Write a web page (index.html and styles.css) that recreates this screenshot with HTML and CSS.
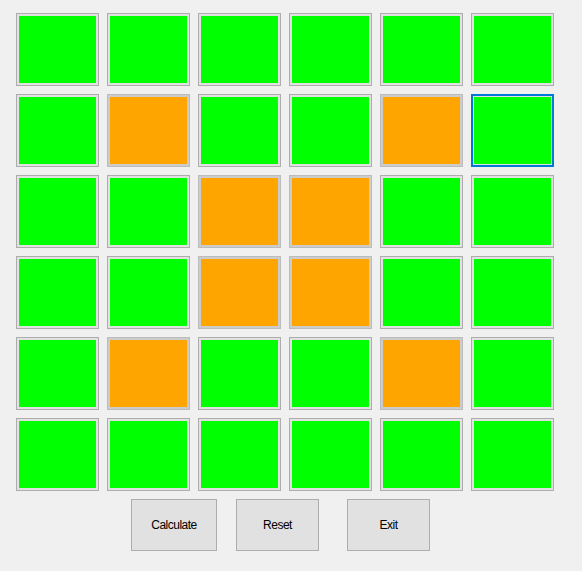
FILE: index.html
```html
<!DOCTYPE html>
<html>
<head>
<meta charset="utf-8">
<link rel="stylesheet" href="styles.css">
</head>
<body>
<div class="form">
  <div class="grid">
    <div class="tile g"></div><div class="tile g"></div><div class="tile g"></div><div class="tile g"></div><div class="tile g"></div><div class="tile g"></div>
    <div class="tile g"></div><div class="tile o"></div><div class="tile g"></div><div class="tile g"></div><div class="tile o"></div><div class="tile g focus"></div>
    <div class="tile g"></div><div class="tile g"></div><div class="tile o"></div><div class="tile o"></div><div class="tile g"></div><div class="tile g"></div>
    <div class="tile g"></div><div class="tile g"></div><div class="tile o"></div><div class="tile o"></div><div class="tile g"></div><div class="tile g"></div>
    <div class="tile g"></div><div class="tile o"></div><div class="tile g"></div><div class="tile g"></div><div class="tile o"></div><div class="tile g"></div>
    <div class="tile g"></div><div class="tile g"></div><div class="tile g"></div><div class="tile g"></div><div class="tile g"></div><div class="tile g"></div>
  </div>
  <div class="buttons">
    <div class="btn btn-calc">Calculate</div>
    <div class="btn btn-reset">Reset</div>
    <div class="btn btn-exit">Exit</div>
  </div>
</div>
</body>
</html>
```
FILE: styles.css
```css
html, body {
  margin: 0;
  padding: 0;
  background: #f0f0f0;
  width: 582px;
  height: 571px;
  overflow: hidden;
}
.form {
  padding: 13px 0 0 16px;
}
.grid {
  display: grid;
  grid-template-columns: repeat(6, 83px);
  grid-auto-rows: 73px;
  column-gap: 8px;
  row-gap: 8px;
}
.tile {
  box-sizing: border-box;
  border: 1px solid #adadad;
}
.tile.g {
  background: #00ff00;
  box-shadow: inset 0 0 0 2px #e1e1e1;
}
.tile.o {
  background: #ffa500;
  border-color: #bcbcbc;
  box-shadow: inset 0 0 0 2px #cccccc;
}
.tile.focus {
  border: 2px solid #0078d7;
  box-shadow: inset 0 0 0 1px #e1e1e1;
}
.buttons {
  display: flex;
  margin-top: 8px;
  padding-left: 115px;
}
.btn {
  box-sizing: border-box;
  height: 52px;
  width: 83px;
  padding-bottom: 1px;
  border: 1px solid #adadad;
  background: #e1e1e1;
  display: flex;
  align-items: center;
  justify-content: center;
  font-family: "Liberation Sans", Arial, sans-serif;
  font-size: 12px;
  letter-spacing: -0.5px;
  color: #000;
}
.btn-calc {
  width: 86px;
}
.btn-reset {
  margin-left: 19px;
}
.btn-exit {
  margin-left: 28px;
}
```
